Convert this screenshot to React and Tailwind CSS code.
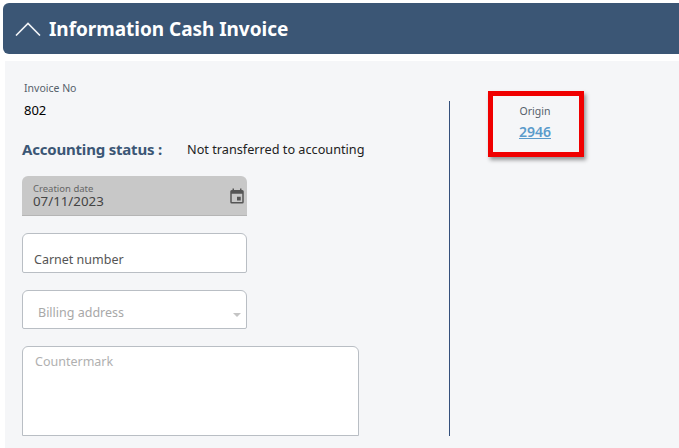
export default function App() {
  return (
    <div className="w-[679px] h-[448px] overflow-hidden bg-white pt-[3px] pl-[3px] font-['Noto_Sans',sans-serif]">
      <div className="h-[51px] bg-[#3b5675] rounded-l-[6px] flex items-center pl-[12px] gap-[8px] text-white">
        <svg width="26" height="14" viewBox="0 0 26 14" fill="none" stroke="#f2f4f7" strokeWidth="1.6">
          <path d="M1 13.5 L13 1.5 L25 13.5" />
        </svg>
        <span className="pt-[2px] text-[19px] font-bold tracking-[-0.04px] leading-none whitespace-nowrap">Information Cash Invoice</span>
      </div>
      <div className="ml-[2px] mt-[7px] h-[387px] bg-[#f5f6f8] flex">
        <div className="w-[445px] pl-[17px] shrink-0 border-r border-[#34507c] mt-[40px] h-[335px]">
          <div className="-mt-[20px] pl-[2px] text-[10.5px] leading-[14px] text-[#555f6b]">Invoice No</div>
          <div className="pl-[2px] mt-[6px] text-[13px] leading-[18px] text-black">802</div>
          <div className="mt-[19px] flex items-center h-[22px] whitespace-nowrap">
            <span className="w-[165px] text-[15px] font-bold tracking-[-0.2px] text-[#3b5675]">Accounting status :</span>
            <span className="pt-[1px] text-[12.7px] text-[#222]">Not transferred to accounting</span>
          </div>
          <div className="mt-[16px] w-[225px] h-[40px] bg-[#c8c8c8] rounded-t-[6px] border-b border-[#b5b5b5] flex items-center justify-between pl-[11px] pr-[1px]">
            <div>
              <div className="text-[9.5px] leading-[10px] text-[#666]">Creation date</div>
              <div className="text-[13.3px] leading-[14px] text-[#444]">07/11/2023</div>
            </div>
            <svg width="18" height="18" viewBox="0 0 24 24" fill="#555">
              <path d="M19 4h-1V2h-2v2H8V2H6v2H5a2 2 0 0 0-2 2v14a2 2 0 0 0 2 2h14a2 2 0 0 0 2-2V6a2 2 0 0 0-2-2zm0 16H5V9h14v11zm-7-7h5v5h-5z" />
            </svg>
          </div>
          <div className="mt-[17px] w-[225px] h-[40px] bg-white border border-[#b9bec4] rounded-t-[6px] rounded-b-[2px] flex items-end pl-[11px] pb-[3px] text-[12.5px] leading-[18px] text-[#555]">
            Carnet number
          </div>
          <div className="mt-[17px] w-[225px] h-[39px] bg-white border border-[#b9bec4] rounded-t-[6px] rounded-b-[2px] flex items-center justify-between pl-[15px] pr-[5px] pt-[8px] text-[12.5px] text-[#a8a8a8]">
            <span>Billing address</span>
            <span className="mt-[2px] w-0 h-0 border-x-[4px] border-x-transparent border-t-[4px] border-t-[#c4c4c4]"></span>
          </div>
          <div className="mt-[17px] w-[337px] h-[90px] bg-white border border-[#b9bec4] rounded-t-[6px] pl-[12px] pt-[6px] text-[12.5px] leading-[18px] text-[#b0b0b0]">
            Countermark
          </div>
        </div>
        <div className="ml-[38px] mt-[30px] w-[96px] h-[66px] border-[5px] border-[#f00000] shadow-[2px_3px_4px_rgba(0,0,0,0.4)] flex flex-col items-center pt-[8px]">
          <div className="-ml-[2px] text-[10.5px] leading-[14px] text-[#555f6b]">Origin</div>
          <a className="-ml-[2px] mt-[5px] text-[14px] leading-[18px] font-semibold underline text-[#5b9bcb]">2946</a>
        </div>
      </div>
    </div>
  );
}
